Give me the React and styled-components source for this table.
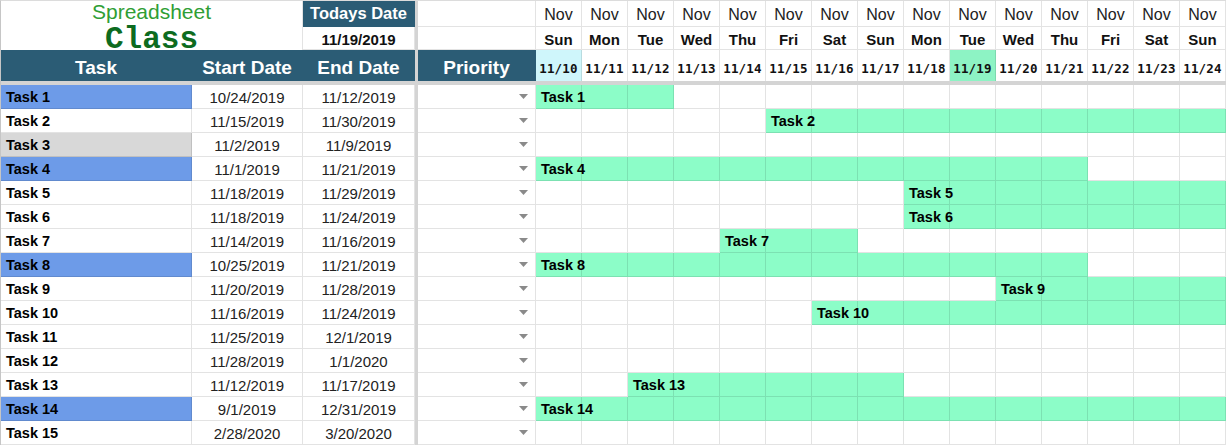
import React from "react";
import styled, { createGlobalStyle } from "styled-components";

const COLS = "191px 111px 112px 3px 118px repeat(15, 46px)";
const LINE = "rgba(0, 0, 0, 0.11)";
const DARK = "#2b5c75";
const BAR = "#8cfdc8";
const SEP = "#d4d4d4";

const Global = createGlobalStyle`
  html, body { margin: 0; padding: 0; background: #fff; }
  body { font-family: "Liberation Sans", Arial, sans-serif; color: #222; }
`;

const Sheet = styled.div`
  width: 1226px;
  height: 445px;
  overflow: hidden;
  box-sizing: border-box;
  border-left: 1px solid #c6c6c6;
  border-top: 1px solid #dcdcdc;
  display: flex;
  flex-direction: column;
`;

const HeaderGrid = styled.div`
  display: grid;
  grid-template-columns: ${COLS};
  grid-template-rows: 26px 23px 31px;
`;

const Row = styled.div`
  display: grid;
  grid-template-columns: ${COLS};
  height: 24px;
`;

const FrozenLine = styled.div`
  height: 4px;
  background: ${SEP};
`;

const Cell = styled.div`
  box-sizing: border-box;
  border-right: 1px solid ${LINE};
  border-bottom: 1px solid ${LINE};
  display: flex;
  align-items: center;
  justify-content: center;
  min-width: 0;
  white-space: nowrap;
  background: ${(p) => p.$bg || "#fff"};
`;

const TitleCell = styled(Cell)`
  grid-column: span 2;
  grid-row: span 2;
  flex-direction: column;
  justify-content: flex-start;
  border-bottom: none;
`;

const TitleTop = styled.div`
  font-family: "Liberation Sans", Arial, sans-serif;
  font-size: 21px;
  line-height: 22px;
  height: 22px;
  color: #2f9e35;
`;

const TitleBottom = styled.div`
  font-family: "Liberation Mono", "Courier New", monospace;
  font-weight: 700;
  font-size: 31px;
  line-height: 24px;
  height: 24px;
  margin-top: 5px;
  color: #0d6b1f;
`;

const DarkCell = styled(Cell)`
  background: ${DARK};
  color: #fff;
  font-weight: 700;
  font-size: ${(p) => p.$size || 19}px;
  padding-top: ${(p) => (p.$low ? 5 : 0)}px;
  border-color: ${DARK};
`;

const BoldValue = styled(Cell)`
  font-weight: 700;
  font-size: 15px;
  color: #111;
  padding-top: 2px;
`;

const SepCell = styled.div`
  background: ${SEP};
  grid-row: ${(p) => (p.$tall ? "span 3" : "auto")};
`;

const MonthCell = styled(Cell)`
  font-size: 16px;
  color: #222;
  padding-top: 3px;
`;

const WeekdayCell = styled(Cell)`
  font-size: 15px;
  font-weight: 700;
  color: #111;
  padding-top: 2px;
`;

const DateHead = styled(Cell)`
  font-family: "DejaVu Sans Mono", "Liberation Mono", monospace;
  font-weight: 700;
  font-size: 12.5px;
  letter-spacing: 0.2px;
  color: #111;
  padding-top: 5px;
  border-bottom: none;
`;

const TaskCell = styled(Cell)`
  justify-content: flex-start;
  padding-left: 5px;
  padding-top: 1px;
  font-weight: 700;
  font-size: 14.5px;
  color: #000;
`;

const DateCell = styled(Cell)`
  font-size: 15px;
  color: #222;
  padding-top: 1px;
`;

const PriorityCell = styled(Cell)`
  justify-content: flex-end;
  padding-right: 7px;
`;

const DayCell = styled(Cell)`
  justify-content: flex-start;
  padding-top: 1px;
  background: ${(p) => (p.$on ? BAR : "#fff")};
`;

const BarLabel = styled.span`
  position: relative;
  z-index: 1;
  padding-left: 5px;
  font-weight: 700;
  font-size: 14.5px;
  color: #000;
`;

const Caret = () => (
  <svg width="9" height="5" viewBox="0 0 9 5">
    <path d="M0 0H9L4.5 5Z" fill="#8a8a8a" />
  </svg>
);

const TONES = { blue: "#6d9be8", gray: "#d8d8d8", none: "#fff" };

const tasks = [
  ["Task 1", "10/24/2019", "11/12/2019", "blue"],
  ["Task 2", "11/15/2019", "11/30/2019", "none"],
  ["Task 3", "11/2/2019", "11/9/2019", "gray"],
  ["Task 4", "11/1/2019", "11/21/2019", "blue"],
  ["Task 5", "11/18/2019", "11/29/2019", "none"],
  ["Task 6", "11/18/2019", "11/24/2019", "none"],
  ["Task 7", "11/14/2019", "11/16/2019", "none"],
  ["Task 8", "10/25/2019", "11/21/2019", "blue"],
  ["Task 9", "11/20/2019", "11/28/2019", "none"],
  ["Task 10", "11/16/2019", "11/24/2019", "none"],
  ["Task 11", "11/25/2019", "12/1/2019", "none"],
  ["Task 12", "11/28/2019", "1/1/2020", "none"],
  ["Task 13", "11/12/2019", "11/17/2019", "none"],
  ["Task 14", "9/1/2019", "12/31/2019", "blue"],
  ["Task 15", "2/28/2020", "3/20/2020", "none"],
];

const WEEK = ["Sun", "Mon", "Tue", "Wed", "Thu", "Fri", "Sat"];
const START = Date.UTC(2019, 10, 10);
const DAYMS = 86400000;
const days = Array.from({ length: 15 }, (_, i) => {
  const d = new Date(START + i * DAYMS);
  return { name: WEEK[d.getUTCDay()], label: `11/${d.getUTCDate()}` };
});

const toIndex = (s) => {
  const [m, d, y] = s.split("/").map(Number);
  return Math.round((Date.UTC(y, m - 1, d) - START) / DAYMS);
};

const headBg = (i) => (i === 0 ? "#cff6fb" : i === 9 ? "#8df3c4" : "#fff");

export default function App() {
  return (
    <>
      <Global />
      <Sheet>
        <HeaderGrid>
          <TitleCell>
            <TitleTop>Spreadsheet</TitleTop>
            <TitleBottom>Class</TitleBottom>
          </TitleCell>
          <DarkCell $size={16.5}>Todays Date</DarkCell>
          <SepCell $tall />
          <Cell />
          {days.map((d) => (
            <MonthCell key={"m" + d.label}>Nov</MonthCell>
          ))}
          <BoldValue>11/19/2019</BoldValue>
          <Cell />
          {days.map((d) => (
            <WeekdayCell key={"w" + d.label}>{d.name}</WeekdayCell>
          ))}
          <DarkCell $low>Task</DarkCell>
          <DarkCell $low>Start Date</DarkCell>
          <DarkCell $low>End Date</DarkCell>
          <DarkCell $low>Priority</DarkCell>
          {days.map((d, i) => (
            <DateHead key={"d" + d.label} $bg={headBg(i)}>
              {d.label}
            </DateHead>
          ))}
        </HeaderGrid>
        <FrozenLine />
        {tasks.map(([name, start, end, tone]) => {
          const s = Math.max(0, toIndex(start));
          const e = Math.min(14, toIndex(end));
          return (
            <Row key={name}>
              <TaskCell $bg={TONES[tone]}>{name}</TaskCell>
              <DateCell>{start}</DateCell>
              <DateCell>{end}</DateCell>
              <SepCell />
              <PriorityCell>
                <Caret />
              </PriorityCell>
              {days.map((d, i) => {
                const on = s <= e && i >= s && i <= e;
                return (
                  <DayCell key={d.label} $on={on}>
                    {on && i === s ? <BarLabel>{name}</BarLabel> : null}
                  </DayCell>
                );
              })}
            </Row>
          );
        })}
      </Sheet>
    </>
  );
}
